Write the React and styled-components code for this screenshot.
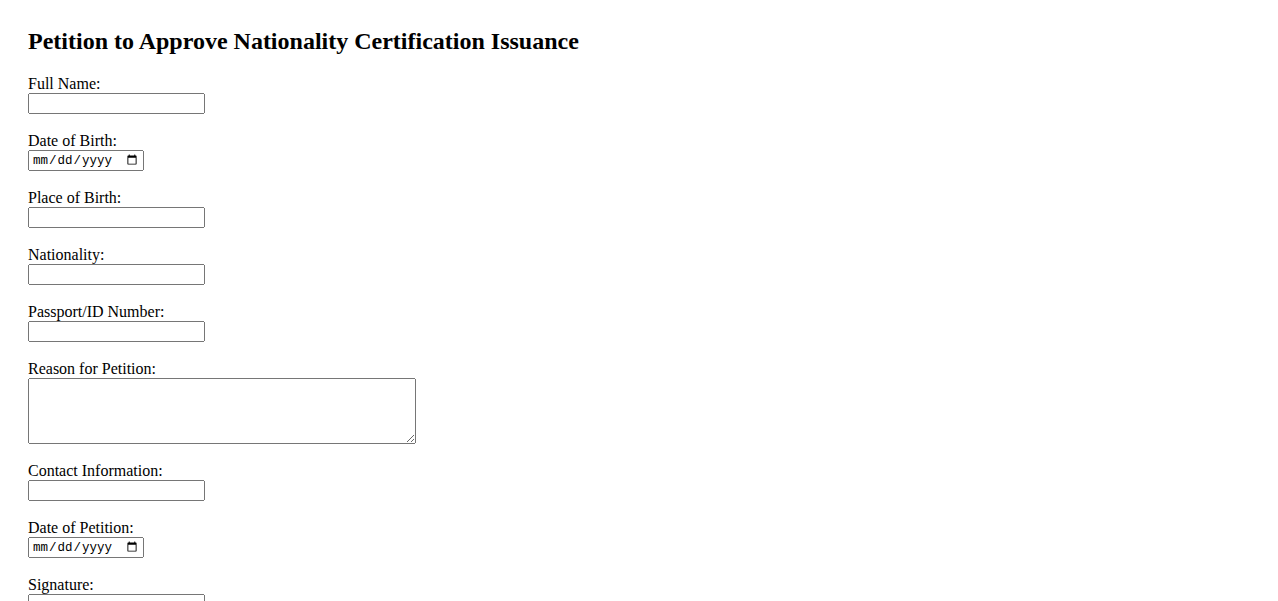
import React from 'react';
import styled, { createGlobalStyle } from 'styled-components';

const GlobalStyle = createGlobalStyle`
  body {
    margin: 0;
    background: #fff;
    color: #000;
    font-family: "Liberation Serif", "Times New Roman", serif;
  }
`;

const Page = styled.div`
  padding: 0 28px 40px;
`;

const Title = styled.h2`
  margin: 28px 0 20px;
  font-size: 24px;
  font-weight: bold;
  line-height: normal;
`;

const Field = styled.div`
  margin-bottom: 18px;
`;

const Label = styled.label`
  display: block;
  font-size: 16px;
  line-height: 18px;
`;

const TextInput = styled.input`
  display: block;
  box-sizing: border-box;
  width: ${({ w }) => w || '177px'};
  height: 21px;
  margin: 0;
  padding: 1px 2px;
  font-family: ${({ type }) =>
    type === 'date' ? '"Liberation Mono", monospace' : '"Liberation Sans", Arial, sans-serif'};
  font-size: ${({ type }) => (type === 'date' ? '12.5px' : '13.333px')};
`;

const TextArea = styled.textarea`
  display: block;
  box-sizing: border-box;
  width: 388px;
  height: 66px;
  margin: 0;
  padding: 2px;
  font-family: "Liberation Mono", monospace;
  font-size: 13.333px;
`;

const fields = [
  { label: 'Full Name:', name: 'fullName' },
  { label: 'Date of Birth:', name: 'dob', type: 'date' },
  { label: 'Place of Birth:', name: 'pob' },
  { label: 'Nationality:', name: 'nationality' },
  { label: 'Passport/ID Number:', name: 'passport' },
  { label: 'Reason for Petition:', name: 'reason', area: true },
  { label: 'Contact Information:', name: 'contact' },
  { label: 'Date of Petition:', name: 'petitionDate', type: 'date' },
  { label: 'Signature:', name: 'signature' },
];

function App() {
  return (
    <>
      <GlobalStyle />
      <Page>
        <Title>Petition to Approve Nationality Certification Issuance</Title>
        <form onSubmit={(e) => e.preventDefault()}>
          {fields.map((f) => (
            <Field key={f.name}>
              <Label htmlFor={f.name}>{f.label}</Label>
              {f.area ? (
                <TextArea id={f.name} name={f.name} />
              ) : f.type === 'date' ? (
                <TextInput type="date" id={f.name} name={f.name} w="116px" />
              ) : (
                <TextInput type="text" id={f.name} name={f.name} />
              )}
            </Field>
          ))}
        </form>
      </Page>
    </>
  );
}

export default App;
